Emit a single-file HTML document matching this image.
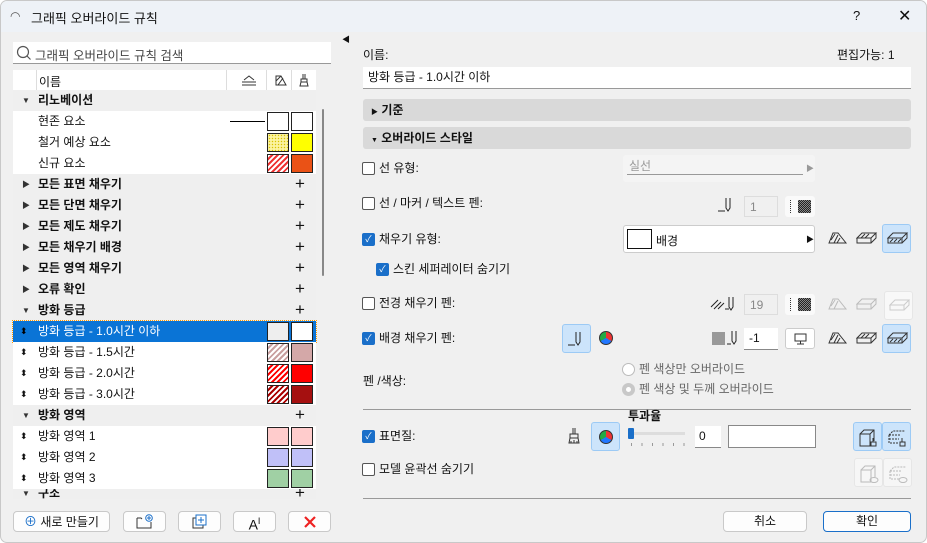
<!DOCTYPE html><html><head><meta charset="utf-8"><style>
*{box-sizing:border-box;margin:0;padding:0}
body{width:927px;height:543px;background:#fff;font-family:"Liberation Sans","Noto Sans CJK KR",sans-serif;font-size:12px;color:#111;position:relative;overflow:hidden}
.a{position:absolute}
.win{left:0;top:0;width:927px;height:543px;background:#f0f0f0;border:1px solid #c8c8c8;border-radius:7px;overflow:hidden}
.title{left:0;top:0;width:927px;height:31px;background:#eef2f7}
.row{position:absolute;left:12px;width:303px;height:21px;line-height:21px}
.g{background:#efefef;font-weight:bold}
.w{background:#fff}
.tri{position:absolute;left:9px;font-size:8px;color:#333}
.plus{position:absolute;left:282px;font-size:17px;font-weight:normal;line-height:20px}
.sw{position:absolute;top:1px;width:22px;height:19px;border:1px solid #222}
.s1{left:254px}.s2{left:278px}
.ud{position:absolute;left:7px;font-size:9px;line-height:21px}
.btn{position:absolute;height:21px;background:#fdfdfd;border:1px solid #c9c9c9;border-radius:4px;text-align:center;line-height:19px}
.cb{position:absolute;width:13px;height:13px;border:1px solid #555;border-radius:2px;background:#fff}
.cb.on{background:#1a6fc9;border-color:#1a6fc9;color:#fff;font-size:9px;line-height:11px;text-align:center}
.lbl{position:absolute;line-height:14px}
.ib{position:absolute;width:29px;height:29px;border-radius:3px}
.ib.sel{background:#cce4fb;border:1px solid #9ccaf5}
.ib svg,.ic{position:absolute;left:4px;top:6px}
.ic{position:absolute}
.hatch{background:repeating-linear-gradient(135deg,#fff 0 2px,var(--c) 2px 4px)}
.chk{background:repeating-conic-gradient(#222 0 25%,#888 0 50%) 0 0/2px 2px}
</style></head><body>
<div class="a win">
<div class="a title"></div>
<div class="a" style="left:9px;top:8px;font-size:12px;color:#555">◠</div>
<div class="a" style="left:30px;top:7px;font-size:13px">그래픽 오버라이드 규칙</div>
<div class="a" style="left:852px;top:7px;font-size:13px">?</div>
<div class="a" style="left:897px;top:5px;font-size:16px;font-weight:300">✕</div>

<div class="a" style="left:12px;top:41px;width:318px;height:22px;background:#fff;border-bottom:1px solid #999"></div>
<svg class="a" style="left:15px;top:44px" width="16" height="16"><circle cx="7" cy="7" r="5.5" fill="none" stroke="#555" stroke-width="1.2"/><line x1="11" y1="11" x2="14.5" y2="14.5" stroke="#555" stroke-width="1.2"/></svg>
<div class="a" style="left:34px;top:44px;color:#444;font-size:12.5px">그래픽 오버라이드 규칙 검색</div>

<div class="a" style="left:12px;top:69px;width:303px;height:21px;background:#fff"></div>
<div class="a" style="left:35px;top:69px;width:1px;height:21px;background:#ddd"></div>
<div class="a" style="left:225px;top:69px;width:1px;height:21px;background:#ddd"></div>
<div class="a" style="left:265px;top:69px;width:1px;height:21px;background:#ddd"></div>
<div class="a" style="left:290px;top:69px;width:1px;height:21px;background:#ddd"></div>
<div class="a" style="left:38px;top:72px">이름</div>
<svg class="a" style="left:240px;top:73px" width="16" height="12"><path d="M3 6 L8 2 L13 6 M1 8 H15 M1 11 H15" fill="none" stroke="#333"/></svg>
<svg class="a" style="left:273px;top:72px" width="14" height="14"><path d="M2 12 V3 H7 L12 12 Z M2 8 L7 3 M4 12 L9 5" fill="none" stroke="#333"/></svg>
<svg class="a" style="left:297px;top:72px" width="12" height="14"><path d="M5 1 V6 H7 V1 M3 6 H9 V9 H3 Z M3 9 L2 13 H10 L9 9" fill="none" stroke="#333"/></svg>

<div class="row g" style="top:89px"><span class="tri">▼</span><span style="margin-left:25px">리노베이션</span></div>
<div class="row w" style="top:110px"><span style="margin-left:25px">현존 요소</span><div class="a" style="left:217px;top:10px;width:35px;height:1px;background:#000"></div><div class="sw s1" style="background:#fff"></div><div class="sw s2" style="background:#fff"></div></div>
<div class="row w" style="top:131px"><span style="margin-left:25px">철거 예상 요소</span><div class="sw s1" style="background:radial-gradient(#d9c200 30%,#fbf3a0 40%) 0 0/3px 3px"></div><div class="sw s2" style="background:#ffff00"></div></div>
<div class="row w" style="top:152px"><span style="margin-left:25px">신규 요소</span><div class="sw s1 hatch" style="--c:#e33"></div><div class="sw s2" style="background:#ea5216"></div></div>
<div class="row g" style="top:173px"><span class="tri">▶</span><span style="margin-left:25px">모든 표면 채우기</span><span class="plus">+</span></div>
<div class="row g" style="top:194px"><span class="tri">▶</span><span style="margin-left:25px">모든 단면 채우기</span><span class="plus">+</span></div>
<div class="row g" style="top:215px"><span class="tri">▶</span><span style="margin-left:25px">모든 제도 채우기</span><span class="plus">+</span></div>
<div class="row g" style="top:236px"><span class="tri">▶</span><span style="margin-left:25px">모든 채우기 배경</span><span class="plus">+</span></div>
<div class="row g" style="top:257px"><span class="tri">▶</span><span style="margin-left:25px">모든 영역 채우기</span><span class="plus">+</span></div>
<div class="row g" style="top:278px"><span class="tri">▶</span><span style="margin-left:25px">오류 확인</span><span class="plus">+</span></div>
<div class="row g" style="top:299px"><span class="tri">▼</span><span style="margin-left:25px">방화 등급</span><span class="plus">+</span></div>
<div class="row" style="top:320px;background:#0a74d6;color:#fff;outline:1px dotted #f90"><span class="ud" style="color:#000">⬍</span><span style="margin-left:25px">방화 등급 - 1.0시간 이하</span><div class="sw s1" style="background:#eee"></div><div class="sw s2" style="background:#fff"></div></div>
<div class="row w" style="top:341px"><span class="ud">⬍</span><span style="margin-left:25px">방화 등급 - 1.5시간</span><div class="sw s1 hatch" style="--c:#c9a0a0"></div><div class="sw s2" style="background:#d4a8a8"></div></div>
<div class="row w" style="top:362px"><span class="ud">⬍</span><span style="margin-left:25px">방화 등급 - 2.0시간</span><div class="sw s1 hatch" style="--c:#f00"></div><div class="sw s2" style="background:#f00"></div></div>
<div class="row w" style="top:383px"><span class="ud">⬍</span><span style="margin-left:25px">방화 등급 - 3.0시간</span><div class="sw s1 hatch" style="--c:#a00"></div><div class="sw s2" style="background:#a51010"></div></div>
<div class="row g" style="top:404px"><span class="tri">▼</span><span style="margin-left:25px">방화 영역</span><span class="plus">+</span></div>
<div class="row w" style="top:425px"><span class="ud">⬍</span><span style="margin-left:25px">방화 영역 1</span><div class="sw s1" style="background:#fcc"></div><div class="sw s2" style="background:#fcc"></div></div>
<div class="row w" style="top:446px"><span class="ud">⬍</span><span style="margin-left:25px">방화 영역 2</span><div class="sw s1" style="background:#c0c0f8"></div><div class="sw s2" style="background:#c0c0f8"></div></div>
<div class="row w" style="top:467px"><span class="ud">⬍</span><span style="margin-left:25px">방화 영역 3</span><div class="sw s1" style="background:#a0d0a4"></div><div class="sw s2" style="background:#a0d0a4"></div></div>
<div class="a" style="left:12px;top:488px;width:303px;height:10px;overflow:hidden;background:#efefef;font-weight:bold"><div class="a" style="left:0;top:-6px;width:303px;line-height:21px"><span class="tri">▼</span><span style="margin-left:25px">구조</span><span class="plus" style="font-weight:normal">+</span></div></div>
<div class="a" style="left:321px;top:108px;width:2px;height:167px;background:#888;border-radius:1px"></div>

<div class="btn" style="left:12px;top:510px;width:97px"><span style="color:#1a6fc9;font-size:13px">⊕</span> 새로 만들기</div>
<div class="btn" style="left:122px;top:510px;width:43px"><svg style="margin-top:2px" width="18" height="15"><path d="M1 4 H5 L6 5 M1 4 V14 H15 V8" fill="none" stroke="#333"/><circle cx="13" cy="4" r="3.3" fill="none" stroke="#1a6fc9"/><path d="M13 2 V6 M11 4 H15" stroke="#1a6fc9"/></svg></div>
<div class="btn" style="left:177px;top:510px;width:43px"><svg style="margin-top:2px" width="16" height="15"><rect x="1" y="4" width="10" height="10" fill="none" stroke="#333"/><rect x="4" y="1" width="10" height="10" fill="#fff" stroke="#1a6fc9"/><path d="M9 3 V9 M6 6 H12" stroke="#1a6fc9"/></svg></div>
<div class="btn" style="left:232px;top:510px;width:43px;font-size:14px">A<sup style="font-size:9px">I</sup></div>
<div class="btn" style="left:287px;top:510px;width:43px"><svg style="margin-top:3px" width="14" height="14"><path d="M2 2 L12 12 M12 2 L2 12" stroke="#e22" stroke-width="2.2"/></svg></div>

<div class="a" style="left:341px;top:33px;font-size:8px">◀</div>
<div class="a" style="left:362px;top:45px">이름:</div>
<div class="a" style="left:836px;top:45px">편집가능: 1</div>
<div class="a" style="left:362px;top:66px;width:548px;height:22px;background:#fff;border-bottom:1px solid #999;line-height:20px;padding-left:5px">방화 등급 - 1.0시간 이하</div>
<div class="a" style="left:362px;top:98px;width:548px;height:22px;background:#d9d9d9;border-radius:3px;line-height:22px;padding-left:8px;font-weight:bold"><span style="font-size:7px">▶</span> 기준</div>
<div class="a" style="left:362px;top:126px;width:548px;height:22px;background:#d9d9d9;border-radius:3px;line-height:22px;padding-left:8px;font-weight:bold"><span style="font-size:7px">▼</span> 오버라이드 스타일</div>

<div class="cb" style="left:361px;top:161px"></div><div class="lbl" style="left:378px;top:160px">선 유형:</div>
<div class="a" style="left:622px;top:154px;width:192px;height:27px;background:#f4f4f4;border-radius:3px;color:#999;padding:2px 6px">실선<div class="a" style="left:4px;top:19px;width:176px;height:1px;background:#999"></div><span class="a" style="left:183px;top:8px;font-size:8px">▶</span></div>
<div class="cb" style="left:361px;top:196px"></div><div class="lbl" style="left:378px;top:195px">선 / 마커 / 텍스트 펜:</div>
<svg class="a" style="left:716px;top:196px" width="22" height="16"><path d="M1 14 H8 M9 1 V11 L11 14 L13 11 V1" fill="none" stroke="#222"/></svg>
<div class="a" style="left:743px;top:195px;width:34px;height:21px;border:1px solid #ddd;background:#f0f0f0;color:#888;padding:3px 5px">1</div>
<div class="a" style="left:784px;top:195px;width:30px;height:21px;background:#fafafa;border-radius:3px"><div class="a" style="left:5px;top:4px;width:1px;height:13px;border-left:1px dotted #333"></div><div class="a chk" style="left:13px;top:4px;width:13px;height:13px"></div></div>

<div class="cb on" style="left:361px;top:232px">✓</div><div class="lbl" style="left:378px;top:231px">채우기 유형:</div>
<div class="a" style="left:622px;top:224px;width:192px;height:28px;background:#fff;border:1px solid #ccc;border-radius:3px"><div class="a" style="left:3px;top:3px;width:25px;height:20px;border:1px solid #111"></div><span class="a" style="left:32px;top:6px">배경</span><span class="a" style="left:182px;top:8px;font-size:8px">▶</span></div>
<svg class="a" style="left:827px;top:230px" width="20" height="14"><path d="M1 12 L5 2 H10 L18 12 Z M3 9 L7 3 M6 12 L10 4 M9 12 L12 7" fill="none" stroke="#333"/></svg>
<svg class="a" style="left:855px;top:230px" width="22" height="14"><path d="M1 7 L6 2 H20 L15 7 Z M1 7 V12 H15 V7 M15 12 L20 7 V2 M5 7 L9 3 M9 7 L13 3" fill="none" stroke="#333"/></svg>
<div class="ib sel" style="left:881px;top:223px"><svg width="22" height="14"><path d="M1 7 L6 2 H20 L15 7 Z M1 7 V12 H15 V7 M15 12 L20 7 V2 M3 11 L6 8 M7 11 L10 8 M11 11 L14 8" fill="none" stroke="#333"/></svg></div>
<div class="cb on" style="left:375px;top:262px">✓</div><div class="lbl" style="left:392px;top:261px">스킨 세퍼레이터 숨기기</div>

<div class="cb" style="left:361px;top:296px"></div><div class="lbl" style="left:378px;top:295px">전경 채우기 펜:</div>
<svg class="a" style="left:709px;top:294px" width="30" height="16"><path d="M1 12 L8 5 M4 14 L11 7 M8 14 L14 8 M15 14 H19 M19 2 V12 L21 15 L23 12 V2" fill="none" stroke="#222"/></svg>
<div class="a" style="left:743px;top:293px;width:34px;height:21px;border:1px solid #ddd;background:#f0f0f0;color:#888;padding:3px 5px">19</div>
<div class="a" style="left:784px;top:293px;width:30px;height:21px;background:#fafafa;border-radius:3px"><div class="a" style="left:5px;top:4px;width:1px;height:13px;border-left:1px dotted #333"></div><div class="a chk" style="left:13px;top:4px;width:13px;height:13px"></div></div>
<svg class="a" style="left:827px;top:296px" width="20" height="14"><path d="M1 12 L5 2 H10 L18 12 Z M3 9 L7 3 M6 12 L10 4" fill="none" stroke="#bbb"/></svg>
<svg class="a" style="left:855px;top:296px" width="22" height="14"><path d="M1 7 L6 2 H20 L15 7 Z M1 7 V12 H15 V7 M15 12 L20 7 V2" fill="none" stroke="#bbb"/></svg>
<div class="ib" style="left:883px;top:290px;background:#f8f8f8;border:1px solid #e6e6e6"><svg width="22" height="14"><path d="M1 7 L6 2 H20 L15 7 Z M1 7 V12 H15 V7 M15 12 L20 7 V2" fill="none" stroke="#ccc"/></svg></div>

<div class="cb on" style="left:361px;top:331px">✓</div><div class="lbl" style="left:378px;top:330px">배경 채우기 펜:</div>
<div class="ib sel" style="left:561px;top:323px"><svg width="20" height="16"><path d="M1 14 H8 M9 1 V11 L11 14 L13 11 V1" fill="none" stroke="#222"/></svg></div>
<div class="a" style="left:598px;top:330px;width:14px;height:14px;border-radius:50%;border:1px solid #333;background:conic-gradient(#e33 0 120deg,#27f 120deg 240deg,#2a4 240deg)"></div>
<div class="a" style="left:711px;top:331px;width:13px;height:13px;background:#999"></div>
<svg class="a" style="left:725px;top:329px" width="16" height="16"><path d="M1 14 H5 M6 1 V11 L8 14 L10 11 V1" fill="none" stroke="#222"/></svg>
<div class="a" style="left:743px;top:327px;width:34px;height:22px;background:#fff;border-bottom:1px solid #888;padding:3px 5px">-1</div>
<div class="a" style="left:784px;top:327px;width:30px;height:21px;background:#fff;border:1px solid #ccc;border-radius:3px"><svg class="a" style="left:8px;top:4px" width="14" height="12"><rect x="1" y="1" width="11" height="7" fill="none" stroke="#333"/><path d="M6.5 8 V11 M3 11 H10" stroke="#333"/></svg></div>
<svg class="a" style="left:827px;top:330px" width="20" height="14"><path d="M1 12 L5 2 H10 L18 12 Z M3 9 L7 3 M6 12 L10 4 M9 12 L12 7" fill="none" stroke="#333"/></svg>
<svg class="a" style="left:855px;top:330px" width="22" height="14"><path d="M1 7 L6 2 H20 L15 7 Z M1 7 V12 H15 V7 M15 12 L20 7 V2 M5 7 L9 3 M9 7 L13 3" fill="none" stroke="#333"/></svg>
<div class="ib sel" style="left:881px;top:323px"><svg width="22" height="14"><path d="M1 7 L6 2 H20 L15 7 Z M1 7 V12 H15 V7 M15 12 L20 7 V2 M3 11 L6 8 M7 11 L10 8 M11 11 L14 8" fill="none" stroke="#333"/></svg></div>

<div class="lbl" style="left:362px;top:373px">펜 /색상:</div>
<div class="a" style="left:621px;top:362px;width:13px;height:13px;border:1px solid #bbb;border-radius:50%;background:#fff"></div><div class="lbl" style="left:638px;top:361px;color:#666">펜 색상만 오버라이드</div>
<div class="a" style="left:621px;top:382px;width:13px;height:13px;border:4px solid #c8c8c8;border-radius:50%;background:#fff"></div><div class="lbl" style="left:638px;top:381px;color:#666">펜 색상 및 두께 오버라이드</div>

<div class="a" style="left:362px;top:408px;width:548px;height:1px;background:#999"></div>
<div class="lbl" style="left:627px;top:408px;font-weight:bold">투과율</div>
<div class="cb on" style="left:361px;top:429px">✓</div><div class="lbl" style="left:378px;top:428px">표면질:</div>
<svg class="a" style="left:566px;top:426px" width="14" height="18"><path d="M6 1 V7 H8 V1 M3 7 H11 V11 H3 Z M3 11 L2 16 H12 L11 11 M4 16 L4 14 M7 16 V13 M10 16 V14" fill="none" stroke="#333"/></svg>
<div class="ib sel" style="left:590px;top:421px"></div>
<div class="a" style="left:598px;top:429px;width:14px;height:14px;border-radius:50%;border:1px solid #333;background:conic-gradient(#e33 0 120deg,#27f 120deg 240deg,#2a4 240deg)"></div>
<div class="a" style="left:627px;top:431px;width:57px;height:3px;background:#ddd"></div>
<div class="a" style="left:627px;top:427px;width:6px;height:11px;background:#1a6fc9;border-radius:1px"></div>
<div class="a" style="left:630px;top:442px;width:54px;height:3px;background:repeating-linear-gradient(90deg,#999 0 1px,transparent 1px 10.5px)"></div>
<div class="a" style="left:694px;top:425px;width:26px;height:22px;background:#fff;border-bottom:1px solid #888;padding:3px 4px">0</div>
<div class="a" style="left:727px;top:424px;width:88px;height:23px;background:#fff;border:1px solid #888"></div>
<div class="ib sel" style="left:852px;top:421px"><svg width="22" height="20"><path d="M2 5 H12 V17 H2 Z M2 5 L6 1 H16 V12 M12 5 L16 1" fill="none" stroke="#333"/><path d="M15 9 V13 M13 13 H18 V17 H13 Z" fill="none" stroke="#333"/></svg></div>
<div class="ib sel" style="left:881px;top:421px"><svg width="22" height="20"><path d="M2 6 H14 M2 6 L6 2 H18 M2 6 V14 H12 M2 10 H12" fill="none" stroke="#333" stroke-dasharray="2 1"/><path d="M15 9 V13 M13 13 H18 V17 H13 Z" fill="none" stroke="#333"/></svg></div>
<div class="cb" style="left:361px;top:462px"></div><div class="lbl" style="left:378px;top:461px">모델 윤곽선 숨기기</div>
<div class="ib" style="left:853px;top:457px;background:#f6f6f6;border:1px solid #e6e6e6"><svg width="22" height="20"><path d="M2 5 H12 V17 H2 Z M2 5 L6 1 H16 V12 M12 5 L16 1" fill="none" stroke="#bbb"/><ellipse cx="15" cy="15" rx="4" ry="2.5" fill="none" stroke="#bbb"/></svg></div>
<div class="ib" style="left:882px;top:457px;background:#f6f6f6;border:1px solid #e6e6e6"><svg width="22" height="20"><path d="M2 6 H14 M2 6 L6 2 H18 M2 6 V14 H12 M2 10 H12" fill="none" stroke="#bbb" stroke-dasharray="2 1"/><ellipse cx="15" cy="15" rx="4" ry="2.5" fill="none" stroke="#bbb"/></svg></div>
<div class="a" style="left:362px;top:497px;width:548px;height:1px;background:#999"></div>
<div class="btn" style="left:722px;top:510px;width:84px">취소</div>
<div class="btn" style="left:822px;top:510px;width:88px;border-color:#1a6fc9">확인</div>
</div>
</body></html>
